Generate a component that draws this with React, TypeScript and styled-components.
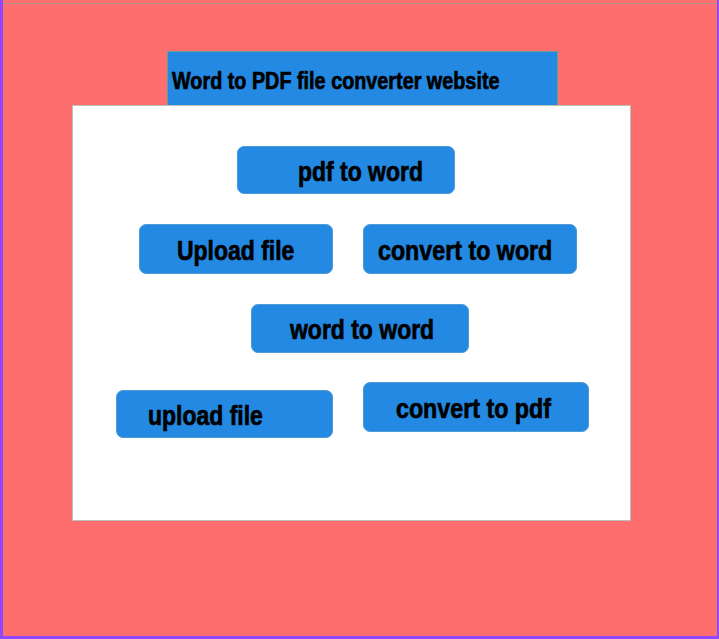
import React from "react";
import styled, { createGlobalStyle } from "styled-components";

const Global = createGlobalStyle`
  html, body { margin: 0; padding: 0; background: #ff6e6e; }
  * { box-sizing: border-box; }
`;

const Frame = styled.div`
  width: 719px;
  height: 639px;
  background: #ff6e6e;
  border-left: 3px solid #9146ff;
  border-right: 2px solid #9146ff;
  border-bottom: 3px solid #9146ff;
  display: flex;
  flex-direction: column;
  font-family: "Liberation Sans", Arial, sans-serif;
  font-weight: 700;
  color: #000;
`;

const TopLine = styled.div`
  height: 1px;
  margin-top: 3px;
  background: #b8908e;
`;

const Header = styled.div`
  margin-left: 164px;
  margin-top: 47px;
  width: 391px;
  height: 54px;
  background: #2389e3;
  border: 1px solid #6a9e9a;
  border-bottom: none;
  display: flex;
  align-items: center;
  padding: 4px 0 0 4px;
  font-size: 24px;
  line-height: 1;
  white-space: nowrap;
`;

const Label = styled.span<{ $sx: number }>`
  display: inline-block;
  transform: scaleX(${(p) => p.$sx});
  transform-origin: left center;
  -webkit-text-stroke: 0.7px #000;
`;

const Card = styled.div`
  margin-left: 69px;
  width: 559px;
  height: 416px;
  background: #fff;
  border: 1px solid #b9c2b4;
  display: flex;
  flex-direction: column;
`;

const Row = styled.div<{ $top: number; $left: number }>`
  display: flex;
  align-items: flex-start;
  gap: 30px;
  margin-top: ${(p) => p.$top}px;
  padding-left: ${(p) => p.$left}px;
`;

const Button = styled.div<{ $w: number; $h: number; $indent: number; $drop?: number }>`
  width: ${(p) => p.$w}px;
  height: ${(p) => p.$h}px;
  margin-top: ${(p) => p.$drop ?? 0}px;
  background: #2389e3;
  border: 1px solid #4f9bd6;
  border-radius: 7px;
  display: flex;
  align-items: center;
  padding-left: ${(p) => p.$indent}px;
  padding-top: 3px;
  font-size: 28px;
  line-height: 1;
  white-space: nowrap;
`;

export default function App() {
  return (
    <>
      <Global />
      <Frame>
        <TopLine />
        <Header>
          <Label $sx={0.825}>Word to PDF file converter website</Label>
        </Header>
        <Card>
          <Row $top={40} $left={164}>
            <Button $w={218} $h={48} $indent={60}>
              <Label $sx={0.82}>pdf to word</Label>
            </Button>
          </Row>
          <Row $top={30} $left={66}>
            <Button $w={194} $h={50} $indent={37}>
              <Label $sx={0.82}>Upload file</Label>
            </Button>
            <Button $w={214} $h={50} $indent={14}>
              <Label $sx={0.83}>convert to word</Label>
            </Button>
          </Row>
          <Row $top={30} $left={178}>
            <Button $w={218} $h={49} $indent={38}>
              <Label $sx={0.82}>word to word</Label>
            </Button>
          </Row>
          <Row $top={29} $left={43}>
            <Button $w={217} $h={48} $indent={31} $drop={8}>
              <Label $sx={0.82}>upload file</Label>
            </Button>
            <Button $w={226} $h={50} $indent={32}>
              <Label $sx={0.83}>convert to pdf</Label>
            </Button>
          </Row>
        </Card>
      </Frame>
    </>
  );
}
